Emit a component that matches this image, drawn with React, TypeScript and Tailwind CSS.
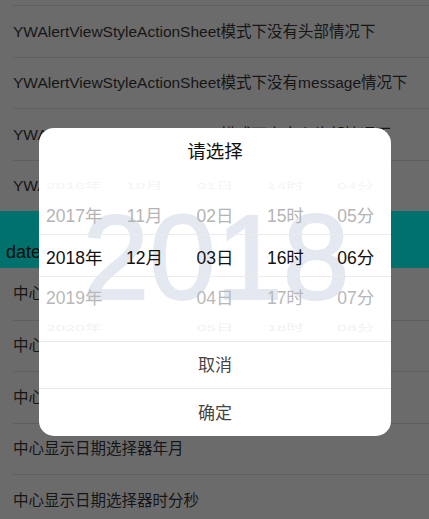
const font = { fontFamily: '"Liberation Sans", "Noto Sans CJK SC", sans-serif' }

const topRows = [
  "YWAlertViewStyleActionSheet模式下没有头部情况下",
  "YWAlertViewStyleActionSheet模式下没有message情况下",
  "YWAlertViewStyleActionSheet模式下自定义头部情况下",
  "YWAlertViewStyleActionSheet模式下自定义按钮样式下",
]

const bottomRows = [
  "中心显示日期选择器年月日时分",
  "中心显示日期选择器年月日时",
  "中心显示日期选择器年月日",
  "中心显示日期选择器年月",
  "中心显示日期选择器时分秒",
]

const wheel = [
  { cells: ["2016年", "10月", "01日", "14时", "04分"], cls: "h-[28px] text-[#f5f5f5] scale-y-[0.55]" },
  { cells: ["2017年", "11月", "02日", "15时", "05分"], cls: "h-[35px] pb-[2px] text-[#b4b4b4]" },
  { cells: ["2018年", "12月", "03日", "16时", "06分"], cls: "h-[44px] pt-[4px] border-y border-[#ebebeb] text-[#111]" },
  { cells: ["2019年", "", "04日", "17时", "07分"], cls: "h-[38px] pt-[4px] text-[#b8b8b8]" },
  { cells: ["2020年", "", "05日", "18时", "08分"], cls: "flex-1 text-[#f2f2f2] scale-y-[0.55]" },
]

function ListRow({ text, first }: { text: string; first?: boolean }) {
  return (
    <div className="h-[51.5px] pl-[13px]">
      <div
        className={`h-full flex items-center whitespace-nowrap text-[15.5px] text-[#161616] ${
          first ? "" : "border-t border-[#5e5e5e]"
        }`}
      >
        {text}
      </div>
    </div>
  )
}

export default function App() {
  return (
    <div className="relative w-[429px] h-[519px] overflow-hidden bg-[#6b6b6b]" style={font}>
      {/* list behind the mask */}
      <div className="h-[5px]" />
      {topRows.map((t) => (
        <ListRow key={t} text={t} />
      ))}
      <div className="h-[57px] bg-[#01716d] flex items-end pb-[2px] pl-[6px] text-[18px] text-[#0d0d0d] whitespace-nowrap">
        datePicker 日期选择器
      </div>
      {bottomRows.map((t, i) => (
        <ListRow key={t} text={t} first={i === 0} />
      ))}

      {/* alert */}
      <div className="absolute left-[39px] top-[128px] w-[352px] h-[308px] bg-white rounded-[15px] overflow-hidden flex flex-col">
        <div className="h-[44px] pt-[3px] flex items-center justify-center text-[18.5px] text-[#111]">请选择</div>

        <div className="relative h-[169px] flex flex-col">
          <div
            className="absolute inset-0 pl-[2px] flex items-center justify-center text-[120px] leading-none text-[#e4e8f0] tracking-[0px]"
            style={{ WebkitTextStroke: "2px #e4e8f0" }}
          >
            2018
          </div>
          {wheel.map((row, i) => (
            <div key={i} className={`relative grid grid-cols-5 ${row.cls}`}>
              {row.cells.map((c, j) => (
                <div key={j} className="flex items-center justify-center text-[17.5px] whitespace-nowrap">
                  {c}
                </div>
              ))}
            </div>
          ))}
        </div>

        <div className="h-[47px] pt-[2px] border-t border-[#e8e8e8] flex items-center justify-center text-[17px] text-[#454545]">
          取消
        </div>
        <div className="flex-1 pt-[3px] border-t border-[#e8e8e8] flex items-center justify-center text-[17px] text-[#454545]">
          确定
        </div>
      </div>
    </div>
  )
}
